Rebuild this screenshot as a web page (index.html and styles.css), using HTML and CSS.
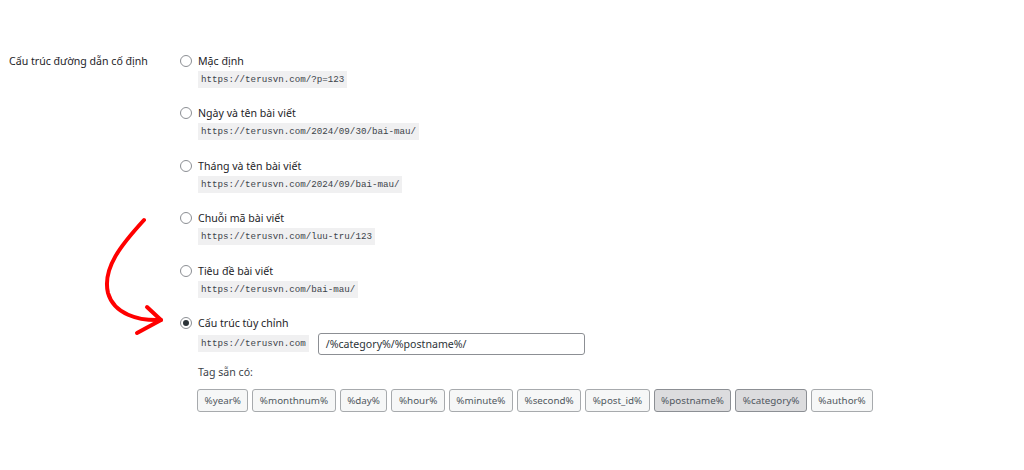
FILE: index.html
```html
<!DOCTYPE html>
<html lang="vi">
<head>
<meta charset="utf-8">
<title>Cấu trúc đường dẫn cố định</title>
<link rel="stylesheet" href="styles.css">
</head>
<body>
<div class="page">
  <div class="form-row">
    <div class="th">Cấu trúc đường dẫn cố định</div>
    <div class="td">
      <div class="opt">
        <label class="radio-line"><span class="radio"></span><span>Mặc định</span></label>
        <code class="sample">https://terusvn.com/?p=123</code>
      </div>
      <div class="opt">
        <label class="radio-line"><span class="radio"></span><span>Ngày và tên bài viết</span></label>
        <code class="sample">https://terusvn.com/2024/09/30/bai-mau/</code>
      </div>
      <div class="opt">
        <label class="radio-line"><span class="radio"></span><span>Tháng và tên bài viết</span></label>
        <code class="sample">https://terusvn.com/2024/09/bai-mau/</code>
      </div>
      <div class="opt">
        <label class="radio-line"><span class="radio"></span><span>Chuỗi mã bài viết</span></label>
        <code class="sample">https://terusvn.com/luu-tru/123</code>
      </div>
      <div class="opt">
        <label class="radio-line"><span class="radio"></span><span>Tiêu đề bài viết</span></label>
        <code class="sample">https://terusvn.com/bai-mau/</code>
      </div>
      <div class="opt">
        <label class="radio-line"><span class="radio checked"></span><span>Cấu trúc tùy chỉnh</span></label>
        <div class="custom">
          <code class="sample">https://terusvn.com</code>
          <div class="input">/%category%/%postname%/</div>
        </div>
        <div class="tags-label">Tag sẵn có:</div>
        <div class="tags">
          <span class="tag">%year%</span>
          <span class="tag">%monthnum%</span>
          <span class="tag">%day%</span>
          <span class="tag">%hour%</span>
          <span class="tag">%minute%</span>
          <span class="tag">%second%</span>
          <span class="tag">%post_id%</span>
          <span class="tag active">%postname%</span>
          <span class="tag active">%category%</span>
          <span class="tag">%author%</span>
        </div>
      </div>
    </div>
  </div>
  <svg class="arrow" width="1024" height="470" viewBox="0 0 1024 470" aria-hidden="true">
    <path d="M144 220 C122 244 102 268 108 293 C114 314 138 321 161 320" fill="none" stroke="#ff0000" stroke-width="4" stroke-linecap="round"/>
    <path d="M147 307 L161 320 L137 333" fill="none" stroke="#ff0000" stroke-width="4" stroke-linecap="round" stroke-linejoin="round"/>
  </svg>
</div>
</body>
</html>
```

FILE: styles.css
```css
html, body {
  margin: 0;
  padding: 0;
  background: #ffffff;
}
body {
  font-family: "Noto Sans", "Open Sans", sans-serif;
  font-size: 10.6px;
  color: #2c3338;
}
.page {
  position: relative;
  width: 1024px;
  height: 470px;
  padding: 53px 0 0 9px;
  box-sizing: border-box;
}
.form-row {
  display: flex;
}
.th {
  width: 171px;
  flex: none;
  color: #1d2327;
  line-height: 16px;
}
.td {
  display: flex;
  flex-direction: column;
}
.opt {
  display: flex;
  flex-direction: column;
  align-items: flex-start;
  margin-bottom: 17.4px;
}
.radio-line {
  display: flex;
  align-items: center;
  height: 16px;
  gap: 6px;
  color: #1d2327;
}
.radio {
  width: 12px;
  height: 12px;
  border: 1px solid #8c8f94;
  border-radius: 50%;
  box-sizing: border-box;
  background: #fff;
  display: flex;
  align-items: center;
  justify-content: center;
}
.radio.checked::after {
  content: "";
  width: 6px;
  height: 6px;
  border-radius: 50%;
  background: #2c3338;
}
.sample {
  margin: 2px 0 0 18px;
  background: #f0f0f1;
  font-family: "Liberation Mono", "DejaVu Sans Mono", monospace;
  font-size: 9.2px;
  line-height: 17px;
  padding: 0 3px;
  color: #3c434a;
}
.custom {
  display: flex;
  align-items: center;
  margin: 2px 0 0 18px;
  gap: 9px;
}
.custom .sample {
  margin: 0;
}
.input {
  width: 267px;
  height: 22px;
  box-sizing: border-box;
  border: 1px solid #8c8f94;
  border-radius: 3px;
  padding: 0 7px;
  line-height: 20px;
  color: #2c3338;
}
.tags-label {
  margin: 9px 0 0 18px;
  line-height: 16px;
  color: #3c434a;
}
.tags {
  display: flex;
  gap: 4px;
  margin: 9px 0 0 17px;
}
.tag {
  height: 23px;
  box-sizing: border-box;
  border: 1px solid #a7aaad;
  border-radius: 3px;
  background: #f6f7f7;
  padding: 0 6.5px;
  line-height: 21px;
  font-size: 9.8px;
  color: #50575e;
}
.tag.active {
  background: #dcdcde;
  border-color: #8c8f94;
}
.arrow {
  position: absolute;
  left: 0;
  top: 0;
  pointer-events: none;
}
```
